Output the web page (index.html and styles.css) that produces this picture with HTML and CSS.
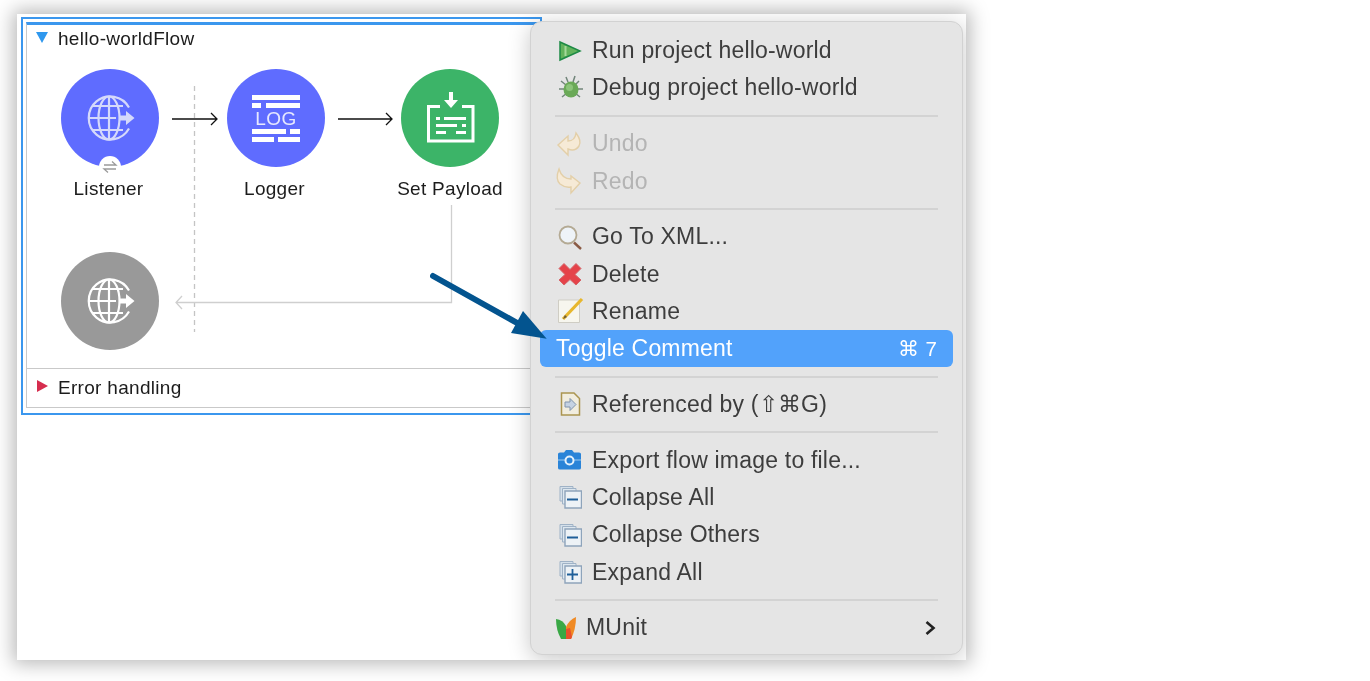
FILE: index.html
```html
<!DOCTYPE html>
<html lang="en">
<head>
    <meta charset="UTF-8">
    <meta name="viewport" content="width=device-width, initial-scale=1.0">
    <title>hello-world flow menu</title>
    <link rel="stylesheet" href="styles.css">
</head>
<body>
    <svg class="defs" aria-hidden="true">
        <symbol id="globe" viewBox="0 0 98 98">
            <g fill="none" stroke="currentColor" stroke-width="2.2">
                <path d="M68 38.500A21.500 21.500 0 1 0 68 59.500"/>
                <ellipse cx="48" cy="49" rx="10.500" ry="21.500"/>
                <path d="M48 27.500V70.500M31 37H62M27.500 49H55M31 61H62"/>
            </g>
            <path d="M58 46.500H65V42L73.500 49L65 56V51.500H58Z" fill="currentColor"/>
        </symbol>
        <symbol id="pages" viewBox="0 0 24 24">
            <path d="M3 1.500H16V16H3Z" fill="#d5e0ea" stroke="#9fb2c6"/>
            <path d="M5.500 3.500H19V19H5.500Z" fill="#dde7ef" stroke="#9fb2c6"/>
            <path d="M8 6H24.500V23H8Z" fill="#edf2f6" stroke="#8ea4bb" stroke-width="1.400"/>
        </symbol>
    </svg>

    <div class="shot">
        <div class="flow">
            <div class="flow-inner">
                <div class="flow-head">
                    <span class="tri tri-down"></span>
                    <span>hello-worldFlow</span>
                </div>

                <div class="canvas">
                    <div class="node-row">
                        <div class="node">
                            <div class="circle purple">
                                <svg class="glyph globe-soft"><use href="#globe"/></svg>
                                <span class="badge">
                                    <svg viewBox="0 0 16 16" width="16" height="16"><path d="M2 6H14L10 2.500M14 10H2L6 13.500" fill="none" stroke="#9a9a9a" stroke-width="1.300"/></svg>
                                </span>
                            </div>
                            <span class="node-name shift">Listener</span>
                        </div>
                        <svg class="link" width="68" height="98" viewBox="0 0 68 98"><path d="M13 50H58M52 44L58 50L52 56" fill="none" stroke="#111" stroke-width="1.300"/></svg>
                        <div class="node">
                            <div class="circle purple">
                                <svg class="glyph" viewBox="0 0 98 98">
                                    <path d="M25 26H73V31H25ZM25 34H34V39H25ZM39 34H73V39H39ZM25 60H59V65H25ZM63 60H73V65H63ZM25 68H47V73H25ZM51 68H73V73H51Z" fill="#fff"/>
                                    <text class="log-text" x="49" y="56" text-anchor="middle">LOG</text>
                                </svg>
                            </div>
                            <span class="node-name shift">Logger</span>
                        </div>
                        <svg class="link" width="76" height="98" viewBox="0 0 76 98"><path d="M13 50H67M61 44L67 50L61 56" fill="none" stroke="#111" stroke-width="1.300"/></svg>
                        <div class="node">
                            <div class="circle green">
                                <svg class="glyph" viewBox="0 0 98 98">
                                    <path d="M39 37.500H27.500V72H72V37.500H61" fill="none" stroke="#fff" stroke-width="3"/>
                                    <path d="M48 23H52V31H57L50 39L43 31H48Z" fill="#fff"/>
                                    <path d="M35 48H39V51H35ZM43 48H65V51H43ZM35 55H56V58H35ZM61 55H65V58H61ZM35 62H45V65H35ZM55 62H65V65H55Z" fill="#fff"/>
                                </svg>
                            </div>
                            <span class="node-name">Set Payload</span>
                        </div>
                    </div>
                    <div class="circle gray">
                        <svg class="glyph"><use href="#globe"/></svg>
                    </div>
                    <svg class="wires" width="500" height="300" viewBox="0 0 500 300">
                        <path d="M167.500 34V280" fill="none" stroke="#c4c4c4" stroke-width="1.300" stroke-dasharray="5 4"/>
                        <path d="M424.500 153V250.500H149M155 244L149 250.500L155 257" fill="none" stroke="#cfcfcf" stroke-width="1.300"/>
                    </svg>
                </div>

                <div class="flow-foot">
                    <span class="tri tri-right"></span>
                    <span>Error handling</span>
                </div>
            </div>
        </div>

        <div class="menu">
            <div class="item">
                <svg class="ico" viewBox="0 0 24 24"><path d="M3 3L23 12L3 21Z" fill="#62b35c" stroke="#1d8a45" stroke-width="1.500"/><path d="M8.500 7V17" stroke="#a5d99b" stroke-width="2"/></svg>
                <span>Run project hello-world</span>
            </div>
            <div class="item">
                <svg class="ico" viewBox="0 0 24 24"><path d="M4 5L9 9M2 13H8M5 21L10 17M22 5L18 9M26 13H20M23 21L18 17M9 1L11 6M18 0L16 6" stroke="#71857a" stroke-width="1.500" fill="none"/><ellipse cx="14" cy="13.500" rx="7.500" ry="8" fill="#6aa957"/><ellipse cx="12.500" cy="11.500" rx="3.500" ry="3.500" fill="#8cc47a"/></svg>
                <span>Debug project hello-world</span>
            </div>
            <div class="sep"></div>
            <div class="item off">
                <svg class="ico" viewBox="0 0 24 24"><path d="M1 13L11 4V9Q18 9 19 1Q25 9 22 14Q18 20 11 17V23Z" fill="#f6ead6" stroke="#e3cfa8" stroke-width="1.400"/></svg>
                <span>Undo</span>
            </div>
            <div class="item off">
                <svg class="ico" viewBox="0 0 24 24"><path d="M23 14L14 7V10Q5 10 2 0Q-2 10 3 15Q8 19 14 18V24Z" fill="#f6ead6" stroke="#e3cfa8" stroke-width="1.400"/></svg>
                <span>Redo</span>
            </div>
            <div class="sep"></div>
            <div class="item">
                <svg class="ico" viewBox="0 0 24 24"><path d="M17 17.500L24 24" stroke="#8a5a44" stroke-width="2.400"/><circle cx="11" cy="10" r="8.500" fill="#eef3f8" stroke="#b4aa94" stroke-width="1.800"/></svg>
                <span>Go To XML...</span>
            </div>
            <div class="item">
                <svg class="ico" viewBox="0 0 24 24"><path d="M7 1.500L13 7.500L19 1.500L24 6.500L18 12.500L24 18L19 23L13 17.500L7 23L2 18L8 12.500L2 6.500Z" fill="#e5434a" stroke="#d4666a"/></svg>
                <span>Delete</span>
            </div>
            <div class="item">
                <svg class="ico" viewBox="0 0 24 24"><path d="M1.500 1V23.500H22.500V1Z" fill="#f7f6ee" stroke="#cfcdc4"/><path d="M6 20L25 0" stroke="#e7b72d" stroke-width="3.200"/><path d="M6 20L8 16L10 18Z" fill="#6b5a3a"/></svg>
                <span>Rename</span>
            </div>
            <div class="item active">
                <span>Toggle Comment</span>
                <span class="keys">⌘ 7</span>
            </div>
            <div class="sep"></div>
            <div class="item">
                <svg class="ico" viewBox="0 0 24 24"><path d="M4.500 1H17L22.500 6.500V23H4.500Z" fill="#f1eddf" stroke="#ab9550" stroke-width="1.500"/><path d="M8 10H13V6.500L19 12.500L13 18.500V15H8Z" fill="#c5d2e3" stroke="#8093ad"/></svg>
                <span>Referenced by (⇧⌘G)</span>
            </div>
            <div class="sep"></div>
            <div class="item">
                <svg class="ico" viewBox="0 0 24 24"><path d="M1 6Q1 4.500 3 4.500H7L9 2H15L17 4.500H22Q24 4.500 24 6V20Q24 21.500 22 21.500H3Q1 21.500 1 20Z" fill="#2a84d8"/><path d="M1 12H24" stroke="#9ccaf0" stroke-width="1"/><circle cx="12.500" cy="12.500" r="4" fill="#2a84d8" stroke="#e5f1fb" stroke-width="2"/></svg>
                <span>Export flow image to file...</span>
            </div>
            <div class="item">
                <svg class="ico"><use href="#pages"/><path d="M11 14.500H22" stroke="#1f5f99" stroke-width="2"/></svg>
                <span>Collapse All</span>
            </div>
            <div class="item">
                <svg class="ico"><use href="#pages"/><path d="M11 14.500H22" stroke="#1f5f99" stroke-width="2"/></svg>
                <span>Collapse Others</span>
            </div>
            <div class="item">
                <svg class="ico"><use href="#pages"/><path d="M11 14.500H22M16.500 9V20" stroke="#1f5f99" stroke-width="1.800"/></svg>
                <span>Expand All</span>
            </div>
            <div class="sep"></div>
            <div class="item munit">
                <svg class="ico-small" viewBox="0 0 20 24"><path d="M0 3Q7 4 10 10V23H5Q0 14 0 3Z" fill="#39a845"/><path d="M20 1Q13 4 10 11V23H15Q20 13 20 1Z" fill="#f08a24"/><path d="M10 13L14 12L16 21L15 23H10Z" fill="#e8502c"/></svg>
                <span>MUnit</span>
                <svg class="chevron" viewBox="0 0 12 16" width="12" height="16"><path d="M2.500 2L9.500 8L2.500 14" fill="none" stroke="#222" stroke-width="2.600"/></svg>
            </div>
        </div>

        <svg class="pointer" width="130" height="80" viewBox="0 0 130 80">
            <path d="M3 4L98 57" stroke="#03548f" stroke-width="6" stroke-linecap="round"/>
            <path d="M116.700 66.700L93 39L81 61Z" fill="#03548f"/>
        </svg>
    </div>
</body>
</html>
```

FILE: styles.css
```css
* {
    margin: 0;
    padding: 0;
    box-sizing: border-box;
}

body {
    font-family: "Liberation Sans", Arial, sans-serif;
    background-color: #fff;
    overflow: hidden;
    height: 681px;
}
.defs {
    display: none;
}
.shot {
    position: relative;
    width: 949px;
    height: 646px;
    margin: 14px 0 0 17px;
    padding: 3px 0 0 4px;
    background-color: #fff;
    box-shadow: 0 0 18px 4px rgba(0, 0, 0, 0.28);
    overflow: hidden;
    filter: blur(0.5px);
}

/* flow box */
.flow {
    width: 521px;
    height: 398px;
    border: 2px solid #3b97ee;
    padding: 3px 0 0 3px;
    color: #1c1c1c;
    font-size: 19px;
    letter-spacing: 0.3px;
}
.flow-inner {
    height: 386px;
    border: 1px solid #c9c9c9;
    border-top: 3px solid #3b97ee;
}
.flow-head {
    display: flex;
    align-items: center;
    gap: 10px;
    height: 27px;
    padding: 1px 0 0 9px;
}
.flow-foot {
    display: flex;
    align-items: center;
    gap: 10px;
    height: 39px;
    padding-left: 10px;
    border-top: 1px solid #c9c9c9;
}
.tri {
    width: 0;
    height: 0;
    margin-top: -4px;
}
.tri-down {
    border-left: 6.5px solid transparent;
    border-right: 6.5px solid transparent;
    border-top: 11px solid #2f98ee;
}
.tri-right {
    border-top: 6px solid transparent;
    border-bottom: 6px solid transparent;
    border-left: 11px solid #d62d4e;
}
.canvas {
    position: relative;
    height: 316px;
    padding: 17px 0 0 34px;
}
.node-row {
    display: flex;
    align-items: flex-start;
    height: 183px;
}
.node {
    display: flex;
    flex-direction: column;
    align-items: center;
    width: 98px;
    gap: 11px;
}
.node-name {
    white-space: nowrap;
}
.shift {
    margin-left: -3px;
}
.circle {
    position: relative;
    width: 98px;
    height: 98px;
    border-radius: 50%;
    flex: none;
}
.purple {
    background-color: #5f6cff;
}
.green {
    background-color: #3cb468;
}
.gray {
    background-color: #999;
    color: #fff;
}
.glyph {
    display: block;
    width: 98px;
    height: 98px;
}
.globe-soft {
    color: #d5d9fb;
}
.log-text {
    font-family: "Liberation Sans", Arial, sans-serif;
    font-size: 19px;
    fill: #e6e8ff;
    letter-spacing: 0.5px;
}
.badge {
    position: absolute;
    left: 38px;
    top: 87px;
    width: 22px;
    height: 22px;
    border-radius: 50%;
    background-color: #fff;
    display: flex;
    align-items: center;
    justify-content: center;
}
.wires {
    position: absolute;
    left: 0;
    top: 0;
}

/* context menu */
.menu {
    position: absolute;
    left: 513px;
    top: 7px;
    width: 433px;
    height: 634px;
    padding: 10px 9px 8px;
    background-color: #e5e5e5;
    border: 1px solid #d2d2d2;
    border-radius: 12px;
    box-shadow: 0 4px 22px rgba(0, 0, 0, 0.22);
    color: #3d3d3d;
    font-size: 23px;
    letter-spacing: 0.2px;
}
.item {
    display: flex;
    align-items: center;
    height: 37.33px;
    padding: 0 17px 0 16px;
    white-space: nowrap;
}
.sep {
    height: 2px;
    margin: 8.2px 15px;
    background-color: #d3d3d3;
}
.off {
    color: #b4b4b4;
}
.active {
    background-color: #52a2fb;
    color: #fff;
    border-radius: 6px;
}
.ico {
    width: 26px;
    height: 24px;
    flex: none;
    margin-right: 10px;
    overflow: visible;
}
.ico-small {
    width: 20px;
    height: 24px;
    flex: none;
    margin-right: 10px;
}
.keys {
    margin: 0 -1px 0 auto;
    font-size: 20.5px;
}
.chevron {
    margin-left: auto;
}
.pointer {
    position: absolute;
    left: 413px;
    top: 258px;
}
```
